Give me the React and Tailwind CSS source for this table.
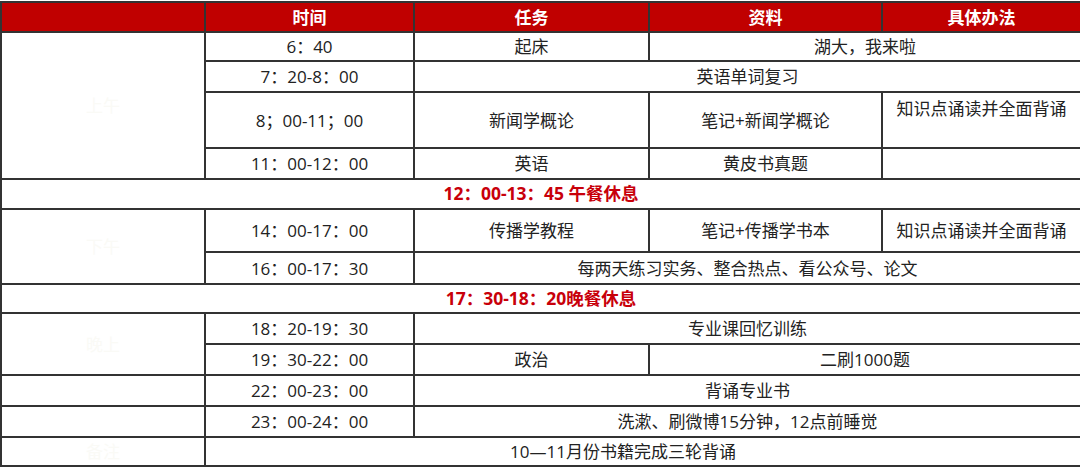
import React from 'react';

const FONT = '"Open Sans", "Noto Sans CJK SC", sans-serif';

const cell = 'border-2 border-[#333] p-0 text-center align-middle';
const faint = 'text-[#fafaf6]';

const Rest = ({ children, h }) => (
  <tr className={h}>
    <td colSpan={5} className={`${cell} font-bold text-[#c8000a] text-[17.5px]`}>
      {children}
    </td>
  </tr>
);

const App = () => {
  return (
    <div className="w-[1080px] h-[473px] bg-white pt-px" style={{ fontFamily: FONT }}>
      <table className="w-[1080px] table-fixed border-collapse text-[17px] text-[#222] leading-none">
        <colgroup>
          <col className="w-[204px]" />
          <col className="w-[209px]" />
          <col className="w-[235px]" />
          <col className="w-[233px]" />
          <col className="w-[199px]" />
        </colgroup>
        <thead>
          <tr className="h-[30px] bg-[#c00000] text-white font-bold">
            <th className={cell}></th>
            <th className={cell}>时间</th>
            <th className={cell}>任务</th>
            <th className={cell}>资料</th>
            <th className={cell}>具体办法</th>
          </tr>
        </thead>
        <tbody>
          <tr className="h-[29px]">
            <td rowSpan={4} className={`${cell} ${faint}`}>上午</td>
            <td className={cell}>6：40</td>
            <td className={cell}>起床</td>
            <td colSpan={2} className={cell}>湖大，我来啦</td>
          </tr>
          <tr className="h-[31px]">
            <td className={cell}>7：20-8：00</td>
            <td colSpan={3} className={cell}>英语单词复习</td>
          </tr>
          <tr className="h-[56px]">
            <td className={cell}>8；00-11；00</td>
            <td className={cell}>新闻学概论</td>
            <td className={cell}>笔记+新闻学概论</td>
            <td className="border-2 border-[#333] p-0 pt-[7px] text-center align-top">知识点诵读并全面背诵</td>
          </tr>
          <tr className="h-[31px]">
            <td className={cell}>11：00-12：00</td>
            <td className={cell}>英语</td>
            <td className={cell}>黄皮书真题</td>
            <td className={cell}></td>
          </tr>
          <Rest h="h-[30px]">12：00-13：45 午餐休息</Rest>
          <tr className="h-[43px]">
            <td rowSpan={2} className={`${cell} ${faint}`}>下午</td>
            <td className={cell}>14：00-17：00</td>
            <td className={cell}>传播学教程</td>
            <td className={cell}>笔记+传播学书本</td>
            <td className={cell}>知识点诵读并全面背诵</td>
          </tr>
          <tr className="h-[32px]">
            <td className={cell}>16：00-17：30</td>
            <td colSpan={3} className={cell}>每两天练习实务、整合热点、看公众号、论文</td>
          </tr>
          <Rest h="h-[29px]">17：30-18：20晚餐休息</Rest>
          <tr className="h-[31px]">
            <td rowSpan={2} className={`${cell} ${faint}`}>晚上</td>
            <td className={cell}>18：20-19：30</td>
            <td colSpan={3} className={cell}>专业课回忆训练</td>
          </tr>
          <tr className="h-[31px]">
            <td className={cell}>19：30-22：00</td>
            <td className={cell}>政治</td>
            <td colSpan={2} className={cell}>二刷1000题</td>
          </tr>
          <tr className="h-[31px]">
            <td className={cell}></td>
            <td className={cell}>22：00-23：00</td>
            <td colSpan={3} className={cell}>背诵专业书</td>
          </tr>
          <tr className="h-[31px]">
            <td className={cell}></td>
            <td className={cell}>23：00-24：00</td>
            <td colSpan={3} className={cell}>洗漱、刷微博15分钟，12点前睡觉</td>
          </tr>
          <tr className="h-[29px]">
            <td className={`${cell} ${faint}`}>备注</td>
            <td colSpan={4} className="border-2 border-[#333] p-0 pr-[40px] text-center align-middle">10—11月份书籍完成三轮背诵</td>
          </tr>
        </tbody>
      </table>
    </div>
  );
};

export default App;
